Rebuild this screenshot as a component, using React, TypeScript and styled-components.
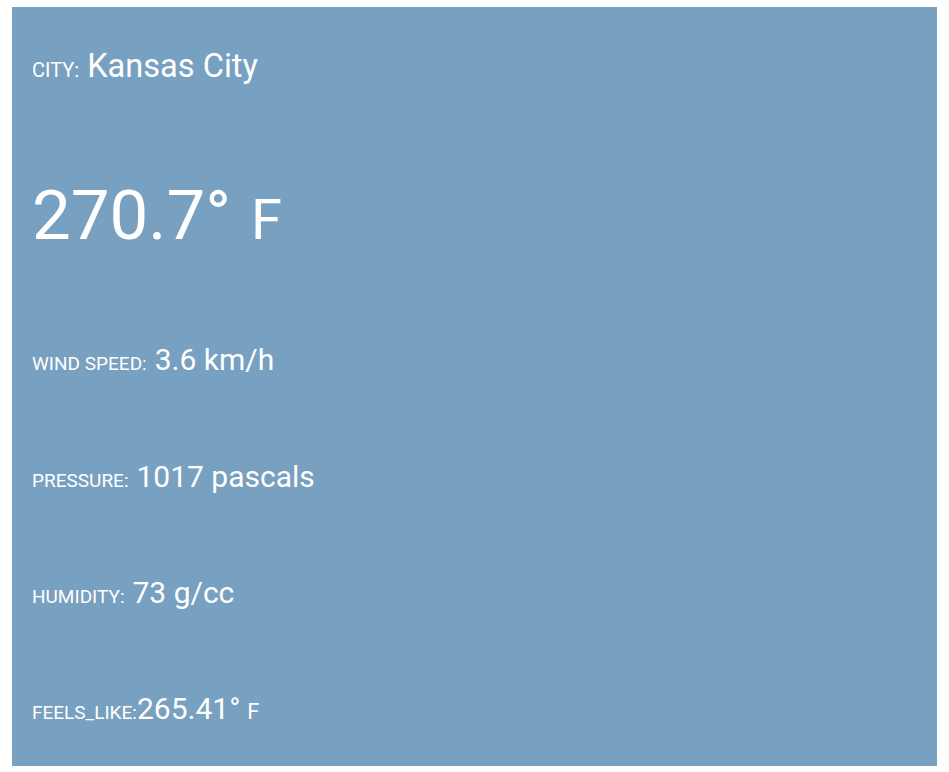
import React from "react";
import styled, { createGlobalStyle } from "styled-components";

const Global = createGlobalStyle`
  html, body { margin: 0; padding: 0; background: #ffffff; }
  body { font-family: Roboto, "Liberation Sans", sans-serif; }
`;

const Page = styled.div`
  padding: 7px 12px 6px 12px;
`;

const Panel = styled.section`
  background: #78a0c0;
  color: #ffffff;
  height: 759px;
  box-sizing: border-box;
  padding: 0 20px;
  display: flex;
  flex-direction: column;
`;

const Row = styled.div<{ $top: number }>`
  display: flex;
  align-items: baseline;
  margin-top: ${(p) => p.$top}px;
  line-height: 1;
`;

const Label = styled.span<{ $gap?: number; $size?: number }>`
  font-size: ${(p) => p.$size ?? 19}px;
  text-transform: uppercase;
  margin-right: ${(p) => (p.$gap ?? 8)}px;
`;

const Value = styled.span<{ $size: number }>`
  font-size: ${(p) => p.$size}px;
`;

const Unit = styled.span<{ $size: number; $gap: number }>`
  font-size: ${(p) => p.$size}px;
  margin-left: ${(p) => p.$gap}px;
`;

export default function App() {
  return (
    <>
      <Global />
      <Page>
        <Panel>
          <Row $top={42.6}>
            <Label $size={20}>city:</Label>
            <Value $size={32.6}>Kansas City</Value>
          </Row>
          <Row $top={98.8}>
            <Value $size={69}>270.7°</Value>
            <Unit $size={56} $gap={20}>F</Unit>
          </Row>
          <Row $top={94.7}>
            <Label>wind speed:</Label>
            <Value $size={30}>3.6 km/h</Value>
          </Row>
          <Row $top={87}>
            <Label>pressure:</Label>
            <Value $size={30}>1017 pascals</Value>
          </Row>
          <Row $top={86}>
            <Label>humidity:</Label>
            <Value $size={30}>73 g/cc</Value>
          </Row>
          <Row $top={86}>
            <Label $gap={0}>feels_like:</Label>
            <Value $size={30}>265.41°</Value>
            <Unit $size={22} $gap={7}>F</Unit>
          </Row>
        </Panel>
      </Page>
    </>
  );
}
